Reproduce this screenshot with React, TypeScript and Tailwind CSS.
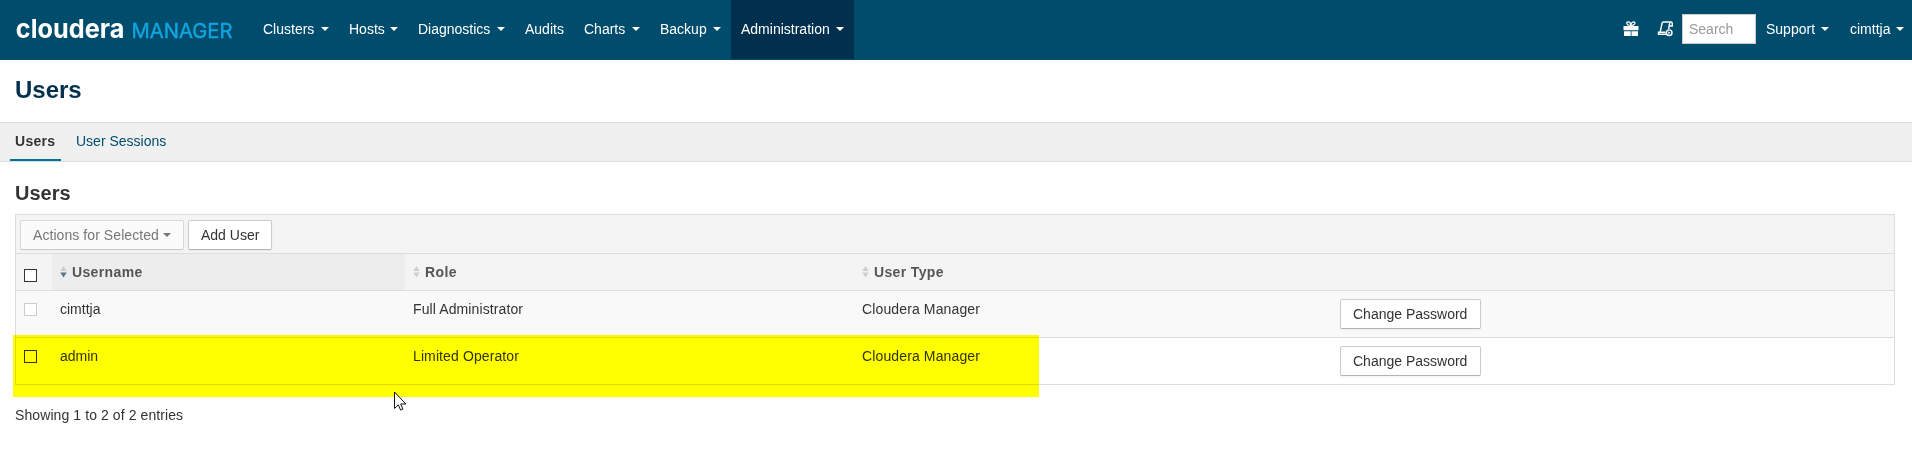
import React from "react";

function Caret({ className = "" }: { className?: string }) {
  return (
    <svg width="8" height="4" viewBox="0 0 8 4" className={`shrink-0 ${className}`} fill="currentColor">
      <path d="M0 0h8L4 4z" />
    </svg>
  );
}

function NavItem({ label, width, active, caret = true }: { label: string; width: string; active?: boolean; caret?: boolean }) {
  return (
    <a className={`flex h-[59px] items-center pb-[2px] pl-[10px] whitespace-nowrap ${width} ${active ? "bg-[#00304e]" : ""}`}>
      {label}
      {caret && <Caret className="mr-[10px] ml-auto" />}
    </a>
  );
}

function Sort({ active }: { active?: boolean }) {
  return (
    <svg width="7" height="12" viewBox="0 0 7 12" className="mr-[5px] shrink-0">
      <path d="M0.3 5h6.4L3.5 0z" fill="#cccfd2" />
      <path d="M0.3 6.5h6.4L3.5 11.5z" fill={active ? "#54758e" : "#cccfd2"} />
    </svg>
  );
}

function Box({ disabled }: { disabled?: boolean }) {
  return <span className={`block size-[13px] border ${disabled ? "border-[#ccc]" : "border-[#333]"} bg-white`} />;
}

function Button({ children, className = "" }: { children: React.ReactNode; className?: string }) {
  return (
    <button
      className={`flex h-[30px] items-center whitespace-nowrap rounded-[2px] border border-[#ccc] border-b-[#b3b3b3] bg-white pl-[12px] text-[#333] shadow-[0_1px_2px_rgba(0,0,0,0.05)] ${className}`}
    >
      {children}
    </button>
  );
}

const users = [
  { name: "cimttja", role: "Full Administrator", type: "Cloudera Manager", locked: true },
  { name: "admin", role: "Limited Operator", type: "Cloudera Manager", locked: false },
];

const columns = "grid grid-cols-[36px_353px_449px_478px_1fr]";

export default function App() {
  return (
    <div className="relative h-[470px] w-[1912px] overflow-hidden bg-white font-['Liberation_Sans',Arial,sans-serif] text-[14px] leading-[20px] text-[#333]">
      <header className="flex h-[60px] bg-[#004c6d] text-white">
        <svg width="253" height="60" viewBox="0 0 253 60" className="shrink-0">
          <text x="15.8" y="37.500" textLength="108.500" lengthAdjust="spacingAndGlyphs" fill="#fff" className="font-['Inter',sans-serif] text-[26px] font-bold">cloudera</text>
          <text x="131.5" y="37.6" textLength="101" lengthAdjust="spacingAndGlyphs" fill="#12a4df" stroke="#12a4df" strokeWidth="0.4" className="font-['Inter',sans-serif] text-[20.5px]">MANAGER</text>
        </svg>
        <nav className="flex">
          <NavItem label="Clusters" width="w-[86px]" />
          <NavItem label="Hosts" width="w-[69px]" />
          <NavItem label="Diagnostics" width="w-[107px]" />
          <NavItem label="Audits" width="w-[59px]" caret={false} />
          <NavItem label="Charts" width="w-[76px]" />
          <NavItem label="Backup" width="w-[81px]" />
          <NavItem label="Administration" width="w-[123px]" active />
        </nav>
        <div className="ml-auto flex h-[58px] items-center">
          <svg width="16" height="16" viewBox="0 0 16 16" className="mr-[18px]" fill="#fff">
            <path d="M0.5 5h15v4.200h-15zM1 10.200h6.700V15H1zM8.500 10.200h6.500V15H8.500z" />
            <path d="M7.800 4.500C3 4.500 3 .8 5 .8S7.800 3 7.800 4.500C7.800 3 8.800 .8 10.800 .8S12.500 4.500 7.800 4.500" fill="none" stroke="#fff" strokeWidth="1.200" />
          </svg>
          <svg width="17" height="16" viewBox="0 0 17 16" className="mr-[8px]" fill="none" stroke="#fff" strokeWidth="1.400">
            <path d="M3.200 11L5 2.500Q5.300 1 6.500 1H14Q15.500 1.200 15.300 3V5H12.500M12.800 1.500L11.600 8M9 13.300H1.500V11.300H8.500" />
            <circle cx="12.200" cy="11.700" r="2.800" />
            <path d="M11.300 10.200v3l2.200-1.500z" fill="#fff" stroke="none" />
          </svg>
          <input placeholder="Search" className="h-[30px] w-[74px] border border-[#ccc] bg-white pl-[6px] text-[14px] placeholder:text-[#999]" />
          <a className="ml-[10px] flex h-[59px] w-[84px] items-center">Support<Caret className="ml-[6px]" /></a>
          <a className="flex h-[59px] w-[62px] items-center">cimttja<Caret className="ml-[6px]" /></a>
        </div>
      </header>

      <h1 className="flex h-[62px] items-center pb-[2px] pl-[15px] text-[24px] font-bold text-[#00304e]">Users</h1>

      <div className="flex h-[40px] border-y border-[#ddd] bg-[#f0f0f0] pl-[10px]">
        <a className="flex h-[38px] w-[51px] items-center border-b-2 border-[#007298] pl-[5px] font-bold tracking-[0.3px]">Users</a>
        <a className="flex h-[36px] items-center pl-[15px] text-[#004c6d]">User Sessions</a>
      </div>

      <main className="pl-[15px]">
        <h2 className="flex h-[52px] items-center pt-[10px] text-[20px] font-bold">Users</h2>
        <section className="w-[1880px] border border-[#ddd]">
          <div className="flex h-[39px] items-start gap-[4px] border-b border-[#ddd] bg-[#f4f4f4] pt-[5px] pl-[4px]">
            <Button className="w-[164px] tracking-[0.07px] opacity-65">Actions for Selected<Caret className="ml-[4px]" /></Button>
            <Button className="w-[84px]">Add User</Button>
          </div>
          <div className={`${columns} h-[37px] border-b border-[#ddd] bg-[#f4f4f4] font-bold tracking-[0.36px] text-[#555]`}>
            <div className="pt-[15px] pl-[8px]"><Box /></div>
            <div className="flex items-center bg-[#ededed] pl-[8px]"><Sort active />Username</div>
            <div className="flex items-center pl-[8px]"><Sort />Role</div>
            <div className="flex items-center pl-[8px]"><Sort />User Type</div>
            <div />
          </div>
          {users.map((user, i) => (
            <div key={user.name} className={`${columns} ${i === 0 ? "h-[47px] border-b border-[#ddd] bg-[#f9f9f9]" : "h-[46px] bg-white"}`}>
              <div className="pt-[12px] pl-[8px]"><Box disabled={user.locked} /></div>
              <div className="pt-[8px] pl-[8px]">{user.name}</div>
              <div className="pt-[8px] pl-[8px] tracking-[0.11px]">{user.role}</div>
              <div className="pt-[8px] pl-[8px] tracking-[0.13px]">{user.type}</div>
              <div className="pt-[8px] pl-[8px]"><Button className="w-[141px]">Change Password</Button></div>
            </div>
          ))}
        </section>
        <p className="pt-[20px] tracking-[0.09px]">Showing 1 to 2 of 2 entries</p>
      </main>

      <div className="absolute top-[335px] left-[13px] h-[62px] w-[1026px] bg-[#ffff00] mix-blend-multiply" />
      <svg width="13" height="20" viewBox="0 0 13 20" className="absolute top-[391px] left-[394px]">
        <path d="M.5 1v16.500l3.800-3.700 2.300 5.300 2.300-1-2.200-5.100h5.200z" fill="#fff" stroke="#111" />
      </svg>
    </div>
  );
}
